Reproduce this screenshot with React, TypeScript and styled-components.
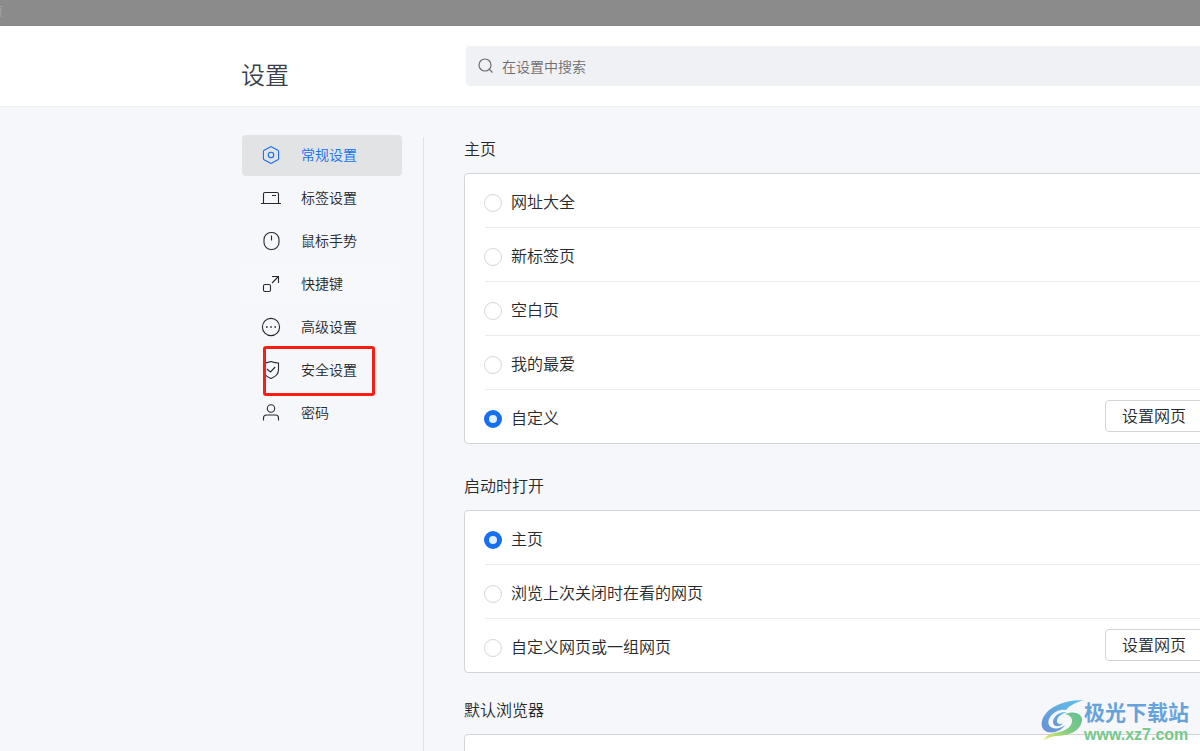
import React from "react";
import styled, { createGlobalStyle } from "styled-components";

const GlobalStyle = createGlobalStyle`
  * { box-sizing: border-box; }
  body {
    margin: 0;
    background: #f6f7fb;
    color: #26282b;
    font-family: "Noto Sans CJK SC", "Liberation Sans", sans-serif;
    font-weight: 350;
  }
  button, input { font: inherit; color: inherit; }
`;

const Window = styled.div`
  position: relative;
  height: 100vh;
  overflow: hidden;
`;

const TitleBar = styled.div`
  height: 26px;
  overflow: hidden;
  background: #8b8b8b;
  color: #a8a8a8;
  font-size: 12px;
  line-height: 22px;
`;

const TabTitle = styled.span`
  display: flex;
  justify-content: flex-end;
  width: 3px;
  overflow: hidden;
  white-space: nowrap;
`;

/* The settings page is a little wider than its window and is clipped by it. */
const Page = styled.div`
  width: calc(100% + 24px);
`;

const Header = styled.header`
  display: flex;
  align-items: flex-start;
  height: 81px;
  padding: 20px 20px 0 241px;
  background: #fff;
  border-bottom: 1px solid #ebecef;
`;

const Title = styled.h1`
  flex: none;
  width: 225px;
  margin: 0;
  padding-top: 10px;
  color: #39404b;
  font-size: 24px;
  line-height: 36px;
  font-weight: 350;
`;

const Search = styled.label`
  display: flex;
  flex: 1;
  align-items: center;
  gap: 8px;
  height: 40px;
  padding: 0 12px;
  border-radius: 4px;
  background: #f0f1f5;
  color: #6b6d70;
`;

const SearchInput = styled.input`
  flex: 1;
  min-width: 0;
  height: 40px;
  padding: 0;
  border: 0;
  outline: 0;
  background: none;
  font-size: 14px;
  &::placeholder { color: #6b6d70; opacity: 1; }
`;

const Body = styled.div`
  display: flex;
  align-items: stretch;
  padding-left: 242px;
`;

const Nav = styled.nav`
  display: flex;
  flex: none;
  flex-direction: column;
  gap: 2px;
  width: 160px;
  padding-top: 28px;
`;

const NavItem = styled.a<{ $state?: "active" | "hover" }>`
  position: relative;
  display: flex;
  align-items: center;
  gap: 20px;
  height: 41px;
  padding: 0 0 2px 19px;
  border-radius: 4px;
  background: ${(p) => (p.$state === "active" ? "#e2e3e5" : p.$state === "hover" ? "#f7f8fb" : "none")};
  color: ${(p) => (p.$state === "active" ? "#156ff0" : "#26282b")};
  font-size: 14px;
  line-height: 20px;
  text-decoration: none;
`;

const NavLabel = styled.span`
  padding-bottom: 2px;
`;

const Marker = styled.span`
  position: absolute;
  left: 21px;
  top: -4px;
  width: 112px;
  height: 50px;
  border: 3px solid #fb1c12;
  border-radius: 3px;
`;

const Divider = styled.div`
  flex: none;
  width: 1px;
  margin: 30px 40px 0 21px;
  background: #e0e1e5;
`;

const Content = styled.main`
  flex: 1;
  min-width: 0;
  padding-top: 29px;
`;

const Group = styled.fieldset<{ $gap: number }>`
  min-width: 0;
  margin: 0 0 ${(p) => p.$gap}px;
  padding: 0;
  border: 0;
`;

const GroupTitle = styled.legend`
  padding: 0 0 13px;
  font-size: 16px;
  line-height: 24px;
`;

const Card = styled.div`
  padding: 0 20px;
  border: 1px solid #d3d4da;
  border-radius: 4px;
  background: #fff;
`;

const Row = styled.div`
  display: flex;
  align-items: center;
  justify-content: space-between;
  height: 54px;
  border-bottom: 1px solid #ebebed;
  &:last-child { height: 53px; border-bottom: 0; }
`;

const Choice = styled.label`
  display: flex;
  align-items: center;
  gap: 9px;
  padding-top: 4px;
  font-size: 16px;
  line-height: 24px;
`;

const ChoiceText = styled.span`
  padding-bottom: 4px;
`;

const Radio = styled.input`
  appearance: none;
  flex: none;
  width: 18px;
  height: 18px;
  margin: 0 0 0 -1px;
  border: 1px solid #d6d7da;
  border-radius: 50%;
  background: #fff;
  &:checked {
    border: 5px solid #156ff0;
    background: #e3effd;
  }
`;

const PageButton = styled.button`
  height: 32px;
  margin-bottom: 1px;
  padding: 0 16px 2px;
  border: 1px solid #d3d4d8;
  border-radius: 4px;
  background: #fff;
  font-size: 16px;
  line-height: 24px;
`;

const Watermark = styled.div`
  position: absolute;
  right: 11px;
  bottom: 8px;
  display: flex;
  align-items: center;
`;

const SiteName = styled.div`
  color: #66a3da;
  font-size: 21px;
  line-height: 32px;
  font-weight: 700;
`;

const SiteUrl = styled.div`
  color: #74c98b;
  font-family: "Liberation Sans", sans-serif;
  font-size: 16px;
  line-height: 16px;
  font-weight: 700;
`;

const Icon = ({ children }: { children: React.ReactNode }) => (
  <svg width="20" height="20" viewBox="0 0 20 20" fill="none" stroke="currentColor" strokeWidth="1.1" aria-hidden="true">
    {children}
  </svg>
);

const navItems: { label: string; state?: "active" | "hover"; marked?: boolean; icon: React.ReactNode }[] = [
  {
    label: "常规设置",
    state: "active",
    icon: (
      <>
        <path d="M9.2 1.9Q10 1.4 10.8 1.9L16.9 5.2Q17.6 5.6 17.6 6.4V13.6Q17.6 14.4 16.9 14.8L10.8 18.1Q10 18.6 9.2 18.1L3.1 14.8Q2.4 14.4 2.4 13.6V6.4Q2.4 5.6 3.1 5.2Z" />
        <circle cx="10" cy="10" r="2.7" />
      </>
    ),
  },
  {
    label: "标签设置",
    icon: <path d="M0 15.5H20M2.5 15.5V6Q2.5 4.5 4 4.5H16Q17.5 4.5 17.5 6V15.5M11 7.5H15" />,
  },
  {
    label: "鼠标手势",
    icon: (
      <>
        <rect x="3" y="1.5" width="15" height="17" rx="7" />
        <path d="M10.5 4.5V9.5" />
      </>
    ),
  },
  {
    label: "快捷键",
    state: "hover",
    icon: (
      <>
        <rect x="2.5" y="10.5" width="7" height="7" rx="1.5" />
        <path d="M11 9L17.5 2.5M11 2.5H17.5V9" />
      </>
    ),
  },
  {
    label: "高级设置",
    icon: (
      <>
        <circle cx="10" cy="10" r="8.6" />
        <path d="M5 10H6.6M9.2 10H10.8M13.4 10H15" strokeWidth="1.6" />
      </>
    ),
  },
  {
    label: "安全设置",
    marked: true,
    icon: (
      <>
        <path d="M10 1.5Q14 3 17.5 3V10Q17.5 15.5 10 18.5Q2.5 15.5 2.5 10V3Q6 3 10 1.5Z" />
        <path d="M5.8 9L9.5 12L14.2 7" />
      </>
    ),
  },
  {
    label: "密码",
    icon: (
      <>
        <circle cx="10" cy="5.5" r="3.7" />
        <path d="M2.5 17.5V15Q2.5 12 5.5 12H14.5Q17.5 12 17.5 15V17.5" />
      </>
    ),
  },
];

type Option = { label: string; checked?: boolean; button?: boolean };

const groups: { title: string; name: string; gap: number; options: Option[] }[] = [
  {
    title: "主页",
    name: "home",
    gap: 29,
    options: [
      { label: "网址大全" },
      { label: "新标签页" },
      { label: "空白页" },
      { label: "我的最爱" },
      { label: "自定义", checked: true, button: true },
    ],
  },
  {
    title: "启动时打开",
    name: "startup",
    gap: 24,
    options: [
      { label: "主页", checked: true },
      { label: "浏览上次关闭时在看的网页" },
      { label: "自定义网页或一组网页", button: true },
    ],
  },
];

const Logo = () => (
  <svg width="44" height="44" viewBox="0 0 44 44" aria-hidden="true">
    <defs>
      <linearGradient id="blue" x1="1" y1="0" x2="0" y2="1">
        <stop offset="0" stopColor="#5cc4ee" />
        <stop offset="1" stopColor="#6a8fd2" />
      </linearGradient>
      <linearGradient id="green" x1="1" y1="0" x2="0" y2="1">
        <stop offset="0" stopColor="#62c092" />
        <stop offset="0.5" stopColor="#7fcb85" />
        <stop offset="1" stopColor="#e8ea6a" />
      </linearGradient>
    </defs>
    <path fill="url(#blue)" d="M44 3C31 3 17 6 8 14C1 21 0 29 4 33C9 38 21 35 25 28C19 33 11 32 9 28C6 21 16 11 26 13C30 8 37 5 44 3Z" />
    <path fill="url(#blue)" d="M27 15C19 14 13 20 13 25C13 30 20 31 23 26C20 28 17 27 17 24C17 20 21 17 27 15Z" />
    <path fill="url(#green)" d="M25 17C35 13 43 17 42 24C40 34 30 38 18 39C12 39 8 41 4 43C7 37 13 36 19 35C27 33 32 29 32 24C32 20 29 18 25 17Z" />
  </svg>
);

export default function App() {
  return (
    <Window>
      <GlobalStyle />
      <TitleBar>
        <TabTitle>页</TabTitle>
      </TitleBar>
      <Page>
        <Header>
          <Title>设置</Title>
          <Search>
            <svg width="16" height="16" viewBox="0 0 16 16" fill="none" stroke="currentColor" strokeWidth="1.2" aria-hidden="true">
              <circle cx="7" cy="7" r="6" />
              <path d="M11.3 11.3L14.5 14.5" />
            </svg>
            <SearchInput type="text" placeholder="在设置中搜索" aria-label="在设置中搜索" />
          </Search>
        </Header>
        <Body>
          <Nav>
            {navItems.map((item) => (
              <NavItem key={item.label} href="#" $state={item.state}>
                <Icon>{item.icon}</Icon>
                <NavLabel>{item.label}</NavLabel>
                {item.marked && <Marker />}
              </NavItem>
            ))}
          </Nav>
          <Divider />
          <Content>
            {groups.map((group) => (
              <Group key={group.name} $gap={group.gap}>
                <GroupTitle>{group.title}</GroupTitle>
                <Card>
                  {group.options.map((option) => (
                    <Row key={option.label}>
                      <Choice>
                        <Radio type="radio" name={group.name} defaultChecked={option.checked} />
                        <ChoiceText>{option.label}</ChoiceText>
                      </Choice>
                      {option.button && <PageButton type="button">设置网页</PageButton>}
                    </Row>
                  ))}
                </Card>
              </Group>
            ))}
            <Group $gap={24}>
              <GroupTitle>默认浏览器</GroupTitle>
              <Card>
                <Row />
              </Card>
            </Group>
          </Content>
        </Body>
      </Page>
      <Watermark>
        <Logo />
        <div>
          <SiteName>极光下载站</SiteName>
          <SiteUrl>www.xz7.com</SiteUrl>
        </div>
      </Watermark>
    </Window>
  );
}
